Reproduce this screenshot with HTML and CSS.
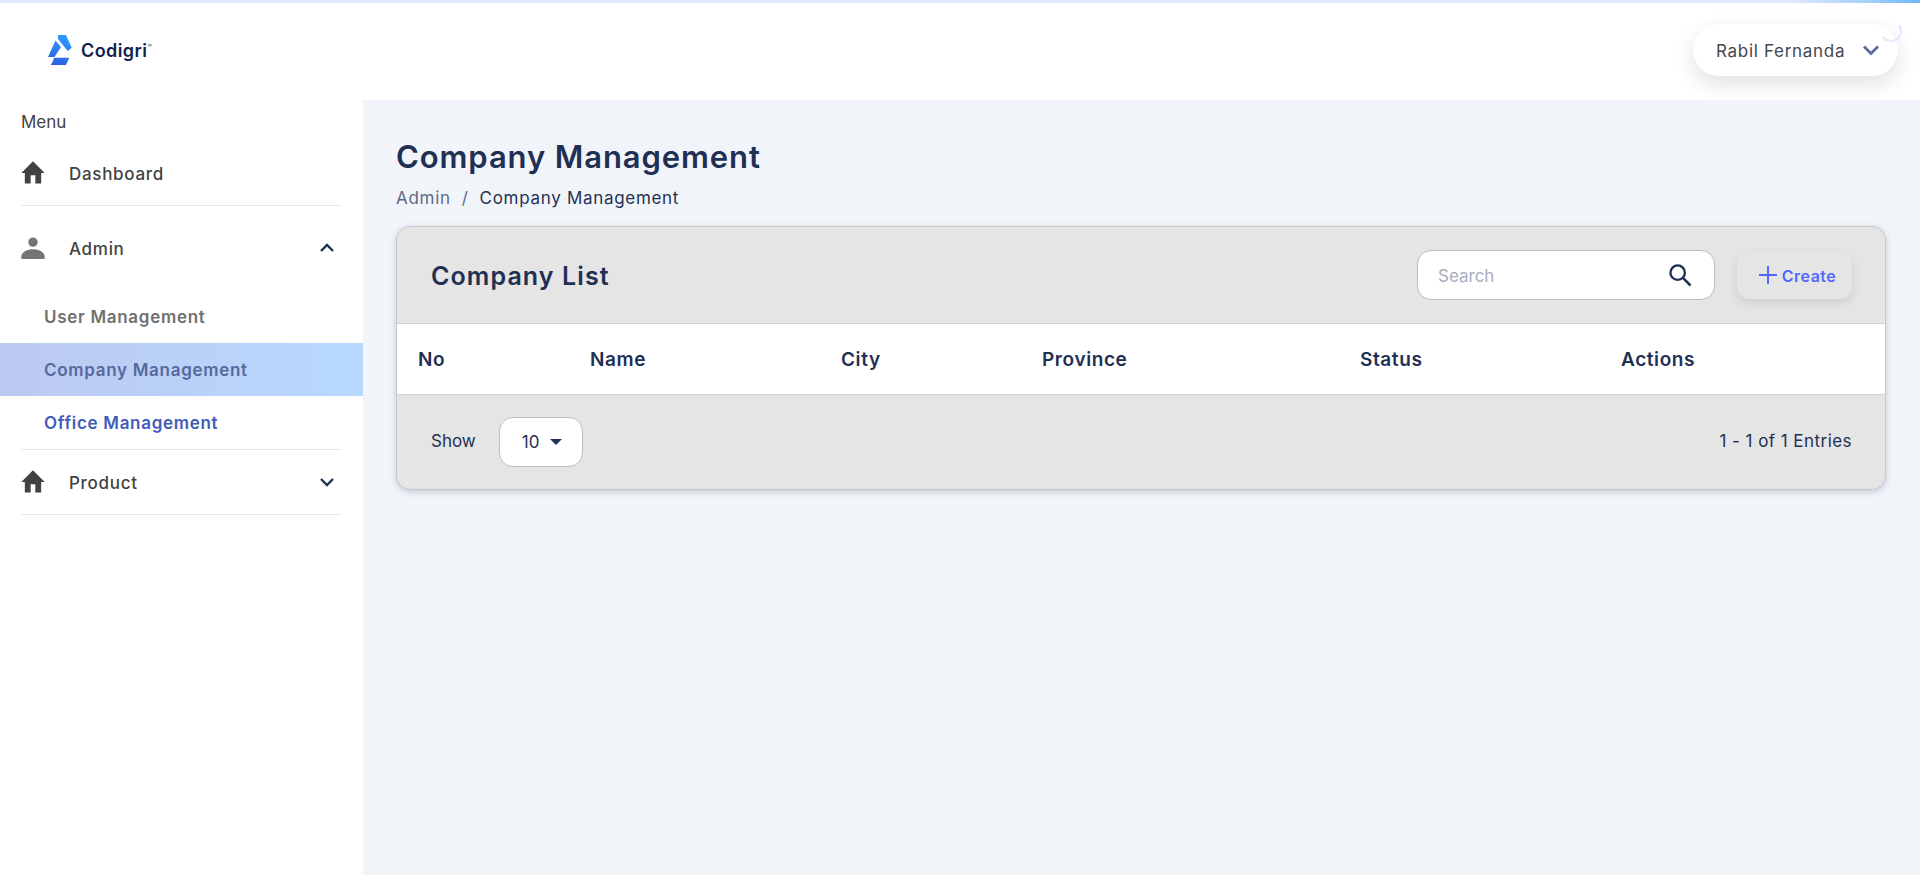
FILE: index.html
```html
<!DOCTYPE html>
<html lang="en">
<head>
    <meta charset="UTF-8">
    <meta name="viewport" content="width=device-width, initial-scale=1.0">
    <title>Company Management</title>
    <link rel="stylesheet" href="styles.css">
</head>
<body>
    <div class="top-strip"></div>
    <header class="topbar">
        <a class="logo" href="#">
            <svg class="logo-mark" viewBox="0 0 26 32" width="26" height="32">
                <defs>
                    <linearGradient id="logoGrad" x1="0.6" y1="0" x2="0.4" y2="1">
                        <stop offset="0" stop-color="#2a9dff"/>
                        <stop offset="1" stop-color="#3160e4"/>
                    </linearGradient>
                </defs>
                <path fill="url(#logoGrad)" d="M11 1h8l5.700 12.700-4 3.300L11 5zM8.500 6.500L14 13l-6.500 10H1zM7 23.700h15.300L19 31H3.700l2-3.300z"/>
            </svg>
            <span class="logo-text">Codigri<sup>™</sup></span>
        </a>
        <div class="user-pill">
            <span class="user-name">Rabil Fernanda</span>
            <svg class="user-chevron" viewBox="0 0 24 24" width="28" height="28"><path d="M6 9l6 6 6-6" fill="none" stroke="#5f6b9e" stroke-width="2.400"/></svg>
            <span class="spinner"></span>
        </div>
    </header>

    <div class="layout">
        <aside class="sidebar">
            <p class="menu-label">Menu</p>
            <a class="nav-item nav-dashboard" href="#">
                <svg class="nav-icon" viewBox="0 0 24 24"><path fill="#424242" d="M10 21v-7h4v7h5v-9h3L12 2 2 12h3v9z"/></svg>
                <span>Dashboard</span>
            </a>
            <a class="nav-item nav-admin" href="#">
                <svg class="nav-icon" viewBox="0 0 24 24"><circle fill="#757575" cx="12" cy="7" r="4"/><path fill="#757575" d="M2 21.500v-2c0-4 5-6.500 10-6.500s10 2.500 10 6.500v2z"/></svg>
                <span>Admin</span>
                <svg class="nav-chevron" viewBox="0 0 24 24"><path d="M6 15l6-6 6 6" fill="none" stroke="#1f3054" stroke-width="2.400"/></svg>
            </a>
            <ul class="submenu">
                <li class="sub-item">User Management</li>
                <li class="sub-item sub-active">Company Management</li>
                <li class="sub-item sub-link">Office Management</li>
            </ul>
            <a class="nav-item nav-product" href="#">
                <svg class="nav-icon" viewBox="0 0 24 24"><path fill="#424242" d="M10 21v-7h4v7h5v-9h3L12 2 2 12h3v9z"/></svg>
                <span>Product</span>
                <svg class="nav-chevron" viewBox="0 0 24 24"><path d="M6 9l6 6 6-6" fill="none" stroke="#1f3054" stroke-width="2.400"/></svg>
            </a>
        </aside>

        <main class="content">
            <h1 class="page-title">Company Management</h1>
            <div class="breadcrumb">
                <span class="crumb-parent">Admin</span>
                <span class="crumb-sep">/</span>
                <span class="crumb-current">Company Management</span>
            </div>

            <section class="card">
                <div class="card-head">
                    <h2 class="card-title">Company List</h2>
                    <div class="search-box">
                        <input class="search-input" type="text" placeholder="Search">
                        <svg viewBox="0 0 24 24" width="28" height="28"><circle cx="10" cy="10" r="6.200" fill="none" stroke="#1f3054" stroke-width="2"/><path d="M14.500 14.500L21 21" stroke="#1f3054" stroke-width="2.200"/></svg>
                    </div>
                    <button class="create-btn">
                        <svg viewBox="0 0 20 20" width="20" height="20"><path d="M10 1v18M1 10h18" stroke="#5468ff" stroke-width="2"/></svg>
                        <span class="create-text">Create</span>
                    </button>
                </div>
                <div class="table-head">
                    <span>No</span>
                    <span>Name</span>
                    <span>City</span>
                    <span>Province</span>
                    <span>Status</span>
                    <span>Actions</span>
                </div>
                <div class="card-foot">
                    <span class="show-label">Show</span>
                    <div class="page-size">
                        <span>10</span>
                        <span class="caret"></span>
                    </div>
                    <span class="entries">1 - 1 of 1 Entries</span>
                </div>
            </section>
        </main>
    </div>
</body>
</html>
```

FILE: styles.css
```css
* {
    box-sizing: border-box;
}
body {
    margin: 0;
    height: 875px;
    overflow: hidden;
    font-family: Inter, "Liberation Sans", sans-serif;
    background-color: #ffffff;
    color: #1f3054;
}
a {
    text-decoration: none;
    color: inherit;
}

.top-strip {
    height: 3px;
    background: linear-gradient(90deg, #e3e9fd 0%, #e3e9fd 93%, #a9d2fb 97%, #6db8f8 100%);
}
.topbar {
    height: 97px;
    display: flex;
    align-items: center;
    justify-content: space-between;
    padding: 0 22px 0 47px;
    background-color: #ffffff;
}
.logo {
    display: flex;
    align-items: center;
    gap: 8px;
    margin-top: -3px;
}
.logo-text {
    font-size: 18px;
    font-weight: 600;
    color: #101f4c;
    letter-spacing: 0.4px;
}
.logo-text sup {
    font-size: 7px;
    color: #666;
    vertical-align: 7px;
}
.user-pill {
    position: relative;
    width: 205px;
    height: 52px;
    margin-top: -3px;
    display: flex;
    align-items: center;
    padding-left: 23px;
    border-radius: 26px;
    background-color: #ffffff;
    box-shadow: 0 8px 22px rgba(0, 0, 0, 0.12);
}
.user-name {
    margin-top: 2px;
    font-size: 17px;
    letter-spacing: 0.7px;
    color: #44464f;
}
.user-chevron {
    margin-left: 12px;
}
.spinner {
    position: absolute;
    top: -4px;
    right: -4px;
    width: 22px;
    height: 22px;
    border-radius: 50%;
    border: 2px solid transparent;
    border-right-color: #e3e6fc;
    border-bottom-color: #e3e6fc;
    transform: rotate(10deg);
}

.layout {
    display: flex;
    height: 775px;
}
.sidebar {
    width: 363px;
    flex-shrink: 0;
    background-color: #ffffff;
    color: #424242;
}
.menu-label {
    margin: 0;
    padding: 12px 0 0 21px;
    font-size: 17px;
    line-height: 20px;
    color: #424242;
}
.nav-item {
    display: flex;
    align-items: center;
    margin: 0 21px;
    font-size: 17px;
    font-weight: 500;
    letter-spacing: 0.7px;
    color: #424242;
}
.nav-item span {
    margin-top: 2px;
}
.nav-icon {
    width: 28px;
    height: 28px;
    margin-left: -2px;
    margin-right: 22px;
    flex-shrink: 0;
}
.nav-chevron {
    width: 24px;
    height: 24px;
    margin-left: auto;
    margin-right: 3px;
}
.nav-dashboard {
    height: 74px;
    padding-top: 9px;
    border-bottom: 1px solid #e8e8e8;
}
.nav-admin {
    height: 84px;
}
.nav-product {
    height: 65px;
    border-bottom: 1px solid #e8e8e8;
}
.submenu {
    list-style: none;
    margin: 0;
    padding: 0;
}
.sub-item {
    height: 53px;
    line-height: 55px;
    padding-left: 44px;
    font-size: 17px;
    font-weight: 600;
    letter-spacing: 0.7px;
    color: #707070;
}
.sub-active {
    background: linear-gradient(90deg, #bcc9f0 0%, #b8d9ff 100%);
    color: #56689c;
}
.sub-link {
    height: 54px;
    margin: 0 21px;
    padding-left: 23px;
    color: #3f5cb8;
    border-bottom: 1px solid #e8e8e8;
}

.content {
    flex: 1;
    padding: 36px 34px 0 33px;
    background-color: #f1f5fa;
}
.page-title {
    margin: 0;
    font-size: 31px;
    line-height: 42px;
    font-weight: 600;
    letter-spacing: 0.9px;
    color: #1f3054;
}
.breadcrumb {
    display: flex;
    gap: 11px;
    margin-top: 9px;
    font-size: 17px;
    line-height: 22px;
    letter-spacing: 0.7px;
}
.crumb-parent,
.crumb-sep {
    color: #5d6b88;
}
.crumb-current {
    color: #1f3054;
}

.card {
    margin-top: 17px;
    height: 264px;
    border: 1px solid #c8c8c8;
    border-radius: 14px;
    background-color: #e5e5e5;
    box-shadow: 0 2px 6px rgba(60, 70, 110, 0.25);
    overflow: hidden;
}
.card-head {
    height: 96px;
    display: flex;
    align-items: center;
    padding: 0 33px 0 34px;
}
.card-title {
    margin: 2px 0 0;
    font-size: 25px;
    font-weight: 600;
    color: #1f3054;
    letter-spacing: 1.1px;
}
.search-box {
    width: 298px;
    height: 50px;
    margin-left: auto;
    display: flex;
    align-items: center;
    padding: 0 20px 0 20px;
    border: 1px solid #bdbdbd;
    border-radius: 14px;
    background-color: #ffffff;
}
.search-input {
    flex: 1;
    min-width: 0;
    border: none;
    outline: none;
    padding: 2px 0 0;
    font-family: inherit;
    font-size: 17px;
    color: #1f3054;
}
.search-input::placeholder {
    color: #a6adbd;
}
.create-btn {
    width: 115px;
    height: 48px;
    margin-left: 22px;
    display: flex;
    align-items: center;
    justify-content: center;
    gap: 4px;
    padding: 0 0 0 5px;
    border: none;
    border-radius: 12px;
    background-color: #e5e5e5;
    box-shadow: 0 4px 10px rgba(0, 0, 0, 0.1);
    color: #5468ff;
    font-family: inherit;
    font-size: 16px;
    font-weight: 600;
    letter-spacing: 0.5px;
}
.create-text {
    margin-top: 1px;
}
.table-head {
    height: 72px;
    display: grid;
    grid-template-columns: 172px 251px 201px 318px 261px 1fr;
    align-items: center;
    padding-left: 21px;
    border-top: 1px solid #d4d4d4;
    border-bottom: 1px solid #d4d4d4;
    background-color: #ffffff;
    font-size: 19px;
    font-weight: 600;
    letter-spacing: 0.6px;
    color: #1f3054;
}
.card-foot {
    height: 94px;
    display: flex;
    align-items: center;
    padding: 0 33px 0 34px;
}
.show-label {
    font-size: 17px;
    margin-top: -2px;
}
.page-size {
    width: 84px;
    height: 50px;
    margin-left: 23px;
    display: flex;
    align-items: center;
    gap: 11px;
    padding-left: 22px;
    border: 1px solid #bdbdbd;
    border-radius: 14px;
    background-color: #ffffff;
    font-size: 17px;
}
.caret {
    width: 0;
    height: 0;
    border-left: 6px solid transparent;
    border-right: 6px solid transparent;
    border-top: 6px solid #1f3054;
}
.entries {
    margin-left: auto;
    margin-top: -2px;
    font-size: 17px;
    letter-spacing: 0.45px;
}
```
